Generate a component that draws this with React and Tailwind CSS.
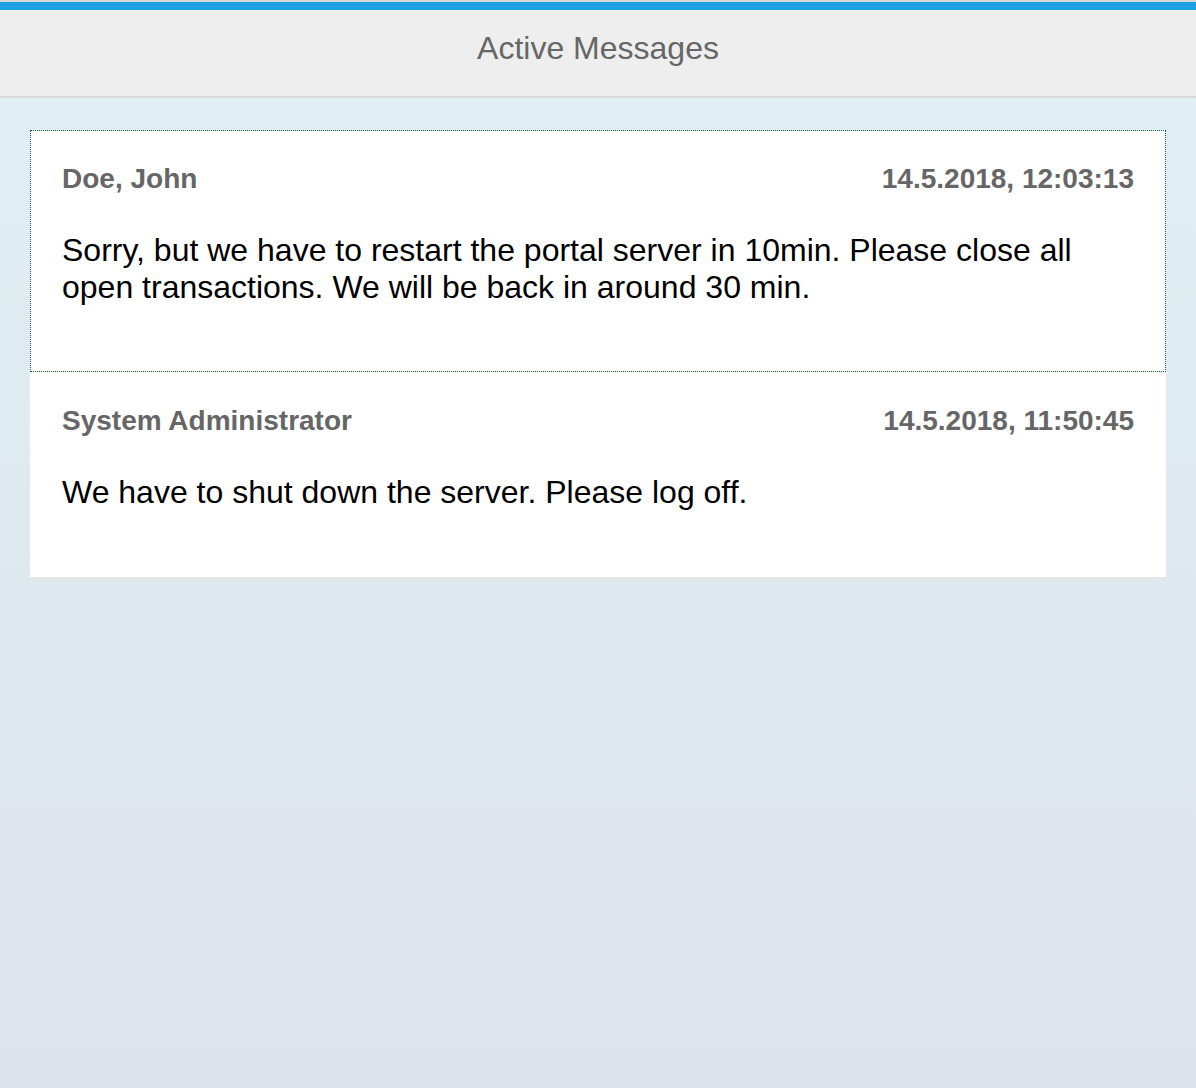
const MESSAGES = [
  {
    id: 1,
    author: "Doe, John",
    time: "14.5.2018, 12:03:13",
    text: "Sorry, but we have to restart the portal server in 10min. Please close all open transactions. We will be back in around 30 min.",
    focused: true,
  },
  {
    id: 2,
    author: "System Administrator",
    time: "14.5.2018, 11:50:45",
    text: "We have to shut down the server. Please log off.",
  },
];

function MessageItem({ msg }) {
  return (
    <li
      className={
        "px-8 pt-[33px] pb-[66px] " +
        (msg.focused ? "outline-1 outline-dotted outline-[#005a8c] -outline-offset-1" : "")
      }
    >
      <div className="flex items-center justify-between text-[28px] font-bold leading-8 text-[#666666]">
        <span>{msg.author}</span>
        <span>{msg.time}</span>
      </div>
      <p className="mt-[37px] text-[32px] leading-[37px] text-black">{msg.text}</p>
    </li>
  );
}

export default function App() {
  return (
    <div
      className="flex min-h-[1088px] flex-col bg-gradient-to-b from-[#dff0f3] to-[#dde3ea]"
      style={{ fontFamily: '"Liberation Sans", Arial, sans-serif' }}
    >
      {/* top bar */}
      <div className="h-[2px] bg-[#d9d9d9]" />
      <div className="h-2 bg-[#1ca0e0]" />
      <header className="flex h-[88px] items-center justify-center border-b-2 border-[#d9d9d9] bg-[#eeeeee] pb-[10px]">
        <h1 className="text-[32px] leading-none text-[#666666]">Active Messages</h1>
      </header>

      <main className="px-[30px] pt-8">
        <ul className="border-b-2 border-[#e5e5e5] bg-white">
          {MESSAGES.map((m) => (
            <MessageItem key={m.id} msg={m} />
          ))}
        </ul>
      </main>
    </div>
  );
}
